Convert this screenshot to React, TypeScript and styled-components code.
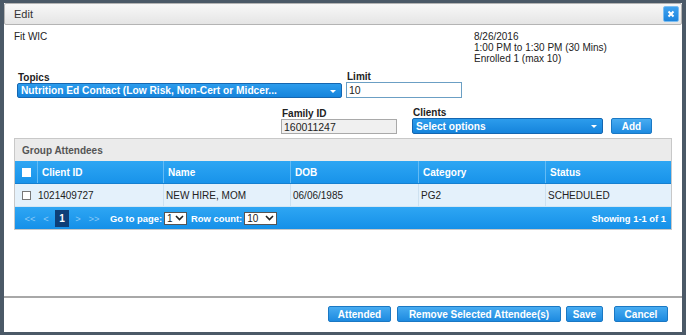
import React from "react";
import styled, { createGlobalStyle } from "styled-components";

const Global = createGlobalStyle`
  html, body { margin: 0; padding: 0; }
  body {
    background: #4b5967;
    font-family: "Liberation Sans", Arial, sans-serif;
    font-size: 10px;
    color: #222;
  }
`;

const Frame = styled.div`
  width: 686px;
  height: 335px;
  box-sizing: border-box;
  padding: 3px 4px 3px 4px;
  background: #4b5967;
`;

const Dialog = styled.div`
  width: 678px;
  height: 329px;
  box-sizing: border-box;
  background: #fff;
  display: flex;
  flex-direction: column;
`;

const TitleBar = styled.div`
  height: 22px;
  box-sizing: border-box;
  border: 1px solid #b4b4b4;
  border-radius: 2px;
  background: linear-gradient(#f8f8f8, #e5e5e5);
  display: flex;
  align-items: center;
  justify-content: space-between;
  padding: 0 2px 0 9px;
`;

const Title = styled.span`
  font-size: 11px;
  color: #333;
`;

const CloseBtn = styled.div`
  width: 16px;
  height: 16px;
  box-sizing: border-box;
  border: 1px solid #7cbdf0;
  border-radius: 2px;
  background: linear-gradient(#3ea2f0, #1b83dc);
  display: flex;
  align-items: center;
  justify-content: center;
`;

const Body = styled.div`
  flex: 1;
  padding: 6px 10px 0 10px;
  display: flex;
  flex-direction: column;
`;

const InfoRow = styled.div`
  display: flex;
  line-height: 11px;
  height: 40px;
`;

const InfoLeft = styled.div`
  width: 460px;
`;

const InfoRight = styled.div`
  display: flex;
  flex-direction: column;
`;

const FormRow = styled.div<{ $indent: number; $mt: number }>`
  display: flex;
  align-items: flex-end;
  padding-left: ${(p) => p.$indent}px;
  margin-top: ${(p) => p.$mt}px;
`;

const Field = styled.div<{ $w: number; $ml?: number }>`
  display: flex;
  flex-direction: column;
  width: ${(p) => p.$w}px;
  margin-left: ${(p) => p.$ml ?? 0}px;
`;

const Label = styled.div`
  font-weight: bold;
  font-size: 10px;
  line-height: 11px;
  color: #222;
  padding-left: 1px;
  height: 11px;
`;

const BlueSelect = styled.div<{ $h: number }>`
  height: ${(p) => p.$h}px;
  box-sizing: border-box;
  border: 1px solid #1566b0;
  border-radius: 2px;
  background: linear-gradient(#2c9cec, #1584dc);
  color: #fff;
  font-weight: bold;
  font-size: 10.2px;
  display: flex;
  align-items: center;
  justify-content: space-between;
  padding: 0 5px 0 3px;
  white-space: nowrap;
  overflow: hidden;
`;

const Caret = styled.span`
  width: 0;
  height: 0;
  border-left: 3px solid transparent;
  border-right: 3px solid transparent;
  border-top: 3px solid #fff;
  margin-top: 1px;
`;

const TextInput = styled.div<{ $gray?: boolean }>`
  height: ${(p) => (p.$gray ? 15 : 16)}px;
  box-sizing: border-box;
  border: 1px solid ${(p) => (p.$gray ? "#a9a9a9" : "#6b9fc4")};
  background: ${(p) => (p.$gray ? "#f0f0f0" : "#fff")};
  color: #222;
  font-size: 10.5px;
  padding-left: 2px;
  display: flex;
  align-items: center;
`;

const Button = styled.div<{ $w: number; $ml?: number }>`
  width: ${(p) => p.$w}px;
  margin-left: ${(p) => p.$ml ?? 0}px;
  height: 16px;
  box-sizing: border-box;
  border: 1px solid #1a78c4;
  border-radius: 2px;
  background: linear-gradient(#48acf1, #1d8ae0);
  color: #fff;
  font-weight: bold;
  font-size: 10px;
  display: flex;
  align-items: center;
  justify-content: center;
  white-space: nowrap;
`;

const Panel = styled.div`
  margin-top: 4px;
  width: 658px;
  border: 1px solid #c8c8c8;
  box-sizing: border-box;
`;

const PanelHeader = styled.div`
  height: 22px;
  background: #ebebeb;
  color: #555;
  font-weight: bold;
  font-size: 10px;
  display: flex;
  align-items: center;
  padding-left: 7px;
`;

const Row = styled.div<{ $head?: boolean }>`
  display: grid;
  grid-template-columns: 22px 126px 127px 128px 127px 1fr;
  height: 23px;
  background: ${(p) => (p.$head ? "linear-gradient(#2ea6f3, #1893ea)" : "#e4f1fb")};
  color: ${(p) => (p.$head ? "#fff" : "#222")};
  font-weight: ${(p) => (p.$head ? "bold" : "normal")};
  font-size: 10px;
  border-bottom: 1px solid ${(p) => (p.$head ? "#1580d0" : "#d4e6f3")};
  box-sizing: border-box;
`;

const Cell = styled.div<{ $head?: boolean; $pad?: number }>`
  display: flex;
  align-items: center;
  padding-left: ${(p) => p.$pad ?? (p.$head ? 4 : 2)}px;
  border-left: 1px solid ${(p) => (p.$head ? "#63bbf5" : "#cde1f0")};
`;

const CheckCell = styled.div`
  display: flex;
  align-items: center;
  padding-left: 7px;
`;

const Check = styled.div<{ $head?: boolean }>`
  width: 9px;
  height: 9px;
  box-sizing: border-box;
  background: #fff;
  border: 1px solid ${(p) => (p.$head ? "#fff" : "#777")};
`;

const Pager = styled.div`
  height: 22px;
  background: linear-gradient(#2ea6f3, #1590e8);
  display: flex;
  align-items: center;
  padding: 0 5px 0 7px;
  color: #fff;
  font-weight: bold;
  font-size: 9.4px;
`;

const PageLink = styled.span<{ $active?: boolean }>`
  width: 16px;
  display: flex;
  justify-content: center;
  color: #8ccaf6;
  font-weight: normal;
`;

const ActivePage = styled.span`
  width: 14px;
  height: 17px;
  margin: 0 1px;
  background: #0e3f78;
  color: #fff;
  font-weight: bold;
  font-size: 10px;
  display: flex;
  align-items: center;
  justify-content: center;
`;

const PagerLabel = styled.span<{ $ml: number }>`
  margin-left: ${(p) => p.$ml}px;
  margin-right: 2px;
`;

const MiniSelect = styled.div<{ $w: number }>`
  width: ${(p) => p.$w}px;
  height: 13px;
  box-sizing: border-box;
  background: #fff;
  border: 1px solid #555;
  color: #222;
  font-weight: normal;
  font-size: 10px;
  display: flex;
  align-items: center;
  justify-content: space-between;
  padding: 0 2px;
`;

const Showing = styled.span`
  margin-left: auto;
`;

const Footer = styled.div`
  border-top: 2px solid #a8a8a8;
  height: 36px;
  box-sizing: border-box;
  display: flex;
  justify-content: flex-end;
  align-items: flex-start;
  padding: 8px 14px 0 0;
`;

const Chevron = () => (
  <svg width="9" height="6" viewBox="0 0 9 6">
    <path d="M1 1l3.5 3.5L8 1" stroke="#222" strokeWidth="1.6" fill="none" />
  </svg>
);

const columns = ["Client ID", "Name", "DOB", "Category", "Status"];
const data = ["1021409727", "NEW HIRE, MOM", "06/06/1985", "PG2", "SCHEDULED"];

export default function App() {
  return (
    <>
      <Global />
      <Frame>
        <Dialog>
          <TitleBar>
            <Title>Edit</Title>
            <CloseBtn>
              <svg width="8" height="8" viewBox="0 0 8 8">
                <path d="M1.5 1.5l5 5M6.5 1.5l-5 5" stroke="#fff" strokeWidth="2" />
              </svg>
            </CloseBtn>
          </TitleBar>
          <Body>
            <InfoRow>
              <InfoLeft>Fit WIC</InfoLeft>
              <InfoRight>
                <span>8/26/2016</span>
                <span>1:00 PM to 1:30 PM (30 Mins)</span>
                <span>Enrolled 1 (max 10)</span>
              </InfoRight>
            </InfoRow>
            <FormRow $indent={3} $mt={0}>
              <Field $w={325}>
                <Label>Topics</Label>
                <BlueSelect $h={15}>
                  <span>Nutrition Ed Contact (Low Risk, Non-Cert or Midcer...</span>
                  <Caret />
                </BlueSelect>
              </Field>
              <Field $w={116} $ml={4}>
                <Label>Limit</Label>
                <TextInput>10</TextInput>
              </Field>
            </FormRow>
            <FormRow $indent={267} $mt={9}>
              <Field $w={116}>
                <Label>Family ID</Label>
                <TextInput $gray>160011247</TextInput>
              </Field>
              <Field $w={191} $ml={15}>
                <Label>Clients</Label>
                <BlueSelect $h={16}>
                  <span>Select options</span>
                  <Caret />
                </BlueSelect>
              </Field>
              <Button $w={41} $ml={8}>
                Add
              </Button>
            </FormRow>
            <Panel>
              <PanelHeader>Group Attendees</PanelHeader>
              <Row $head>
                <CheckCell>
                  <Check $head />
                </CheckCell>
                {columns.map((c) => (
                  <Cell $head key={c}>
                    {c}
                  </Cell>
                ))}
              </Row>
              <Row>
                <CheckCell>
                  <Check />
                </CheckCell>
                {data.map((d, i) => (
                  <Cell key={d} $pad={i === 0 ? 0 : 2} style={i === 0 ? { borderLeftColor: "transparent" } : undefined}>
                    {d}
                  </Cell>
                ))}
              </Row>
              <Pager>
                <PageLink>&lt;&lt;</PageLink>
                <PageLink>&lt;</PageLink>
                <ActivePage>1</ActivePage>
                <PageLink>&gt;</PageLink>
                <PageLink>&gt;&gt;</PageLink>
                <PagerLabel $ml={8}>Go to page:</PagerLabel>
                <MiniSelect $w={23}>
                  <span>1</span>
                  <Chevron />
                </MiniSelect>
                <PagerLabel $ml={4}>Row count:</PagerLabel>
                <MiniSelect $w={33}>
                  <span>10</span>
                  <Chevron />
                </MiniSelect>
                <Showing>Showing 1-1 of 1</Showing>
              </Pager>
            </Panel>
          </Body>
          <Footer>
            <Button $w={63}>Attended</Button>
            <Button $w={164} $ml={6}>
              Remove Selected Attendee(s)
            </Button>
            <Button $w={37} $ml={5}>
              Save
            </Button>
            <Button $w={54} $ml={11}>
              Cancel
            </Button>
          </Footer>
        </Dialog>
      </Frame>
    </>
  );
}
